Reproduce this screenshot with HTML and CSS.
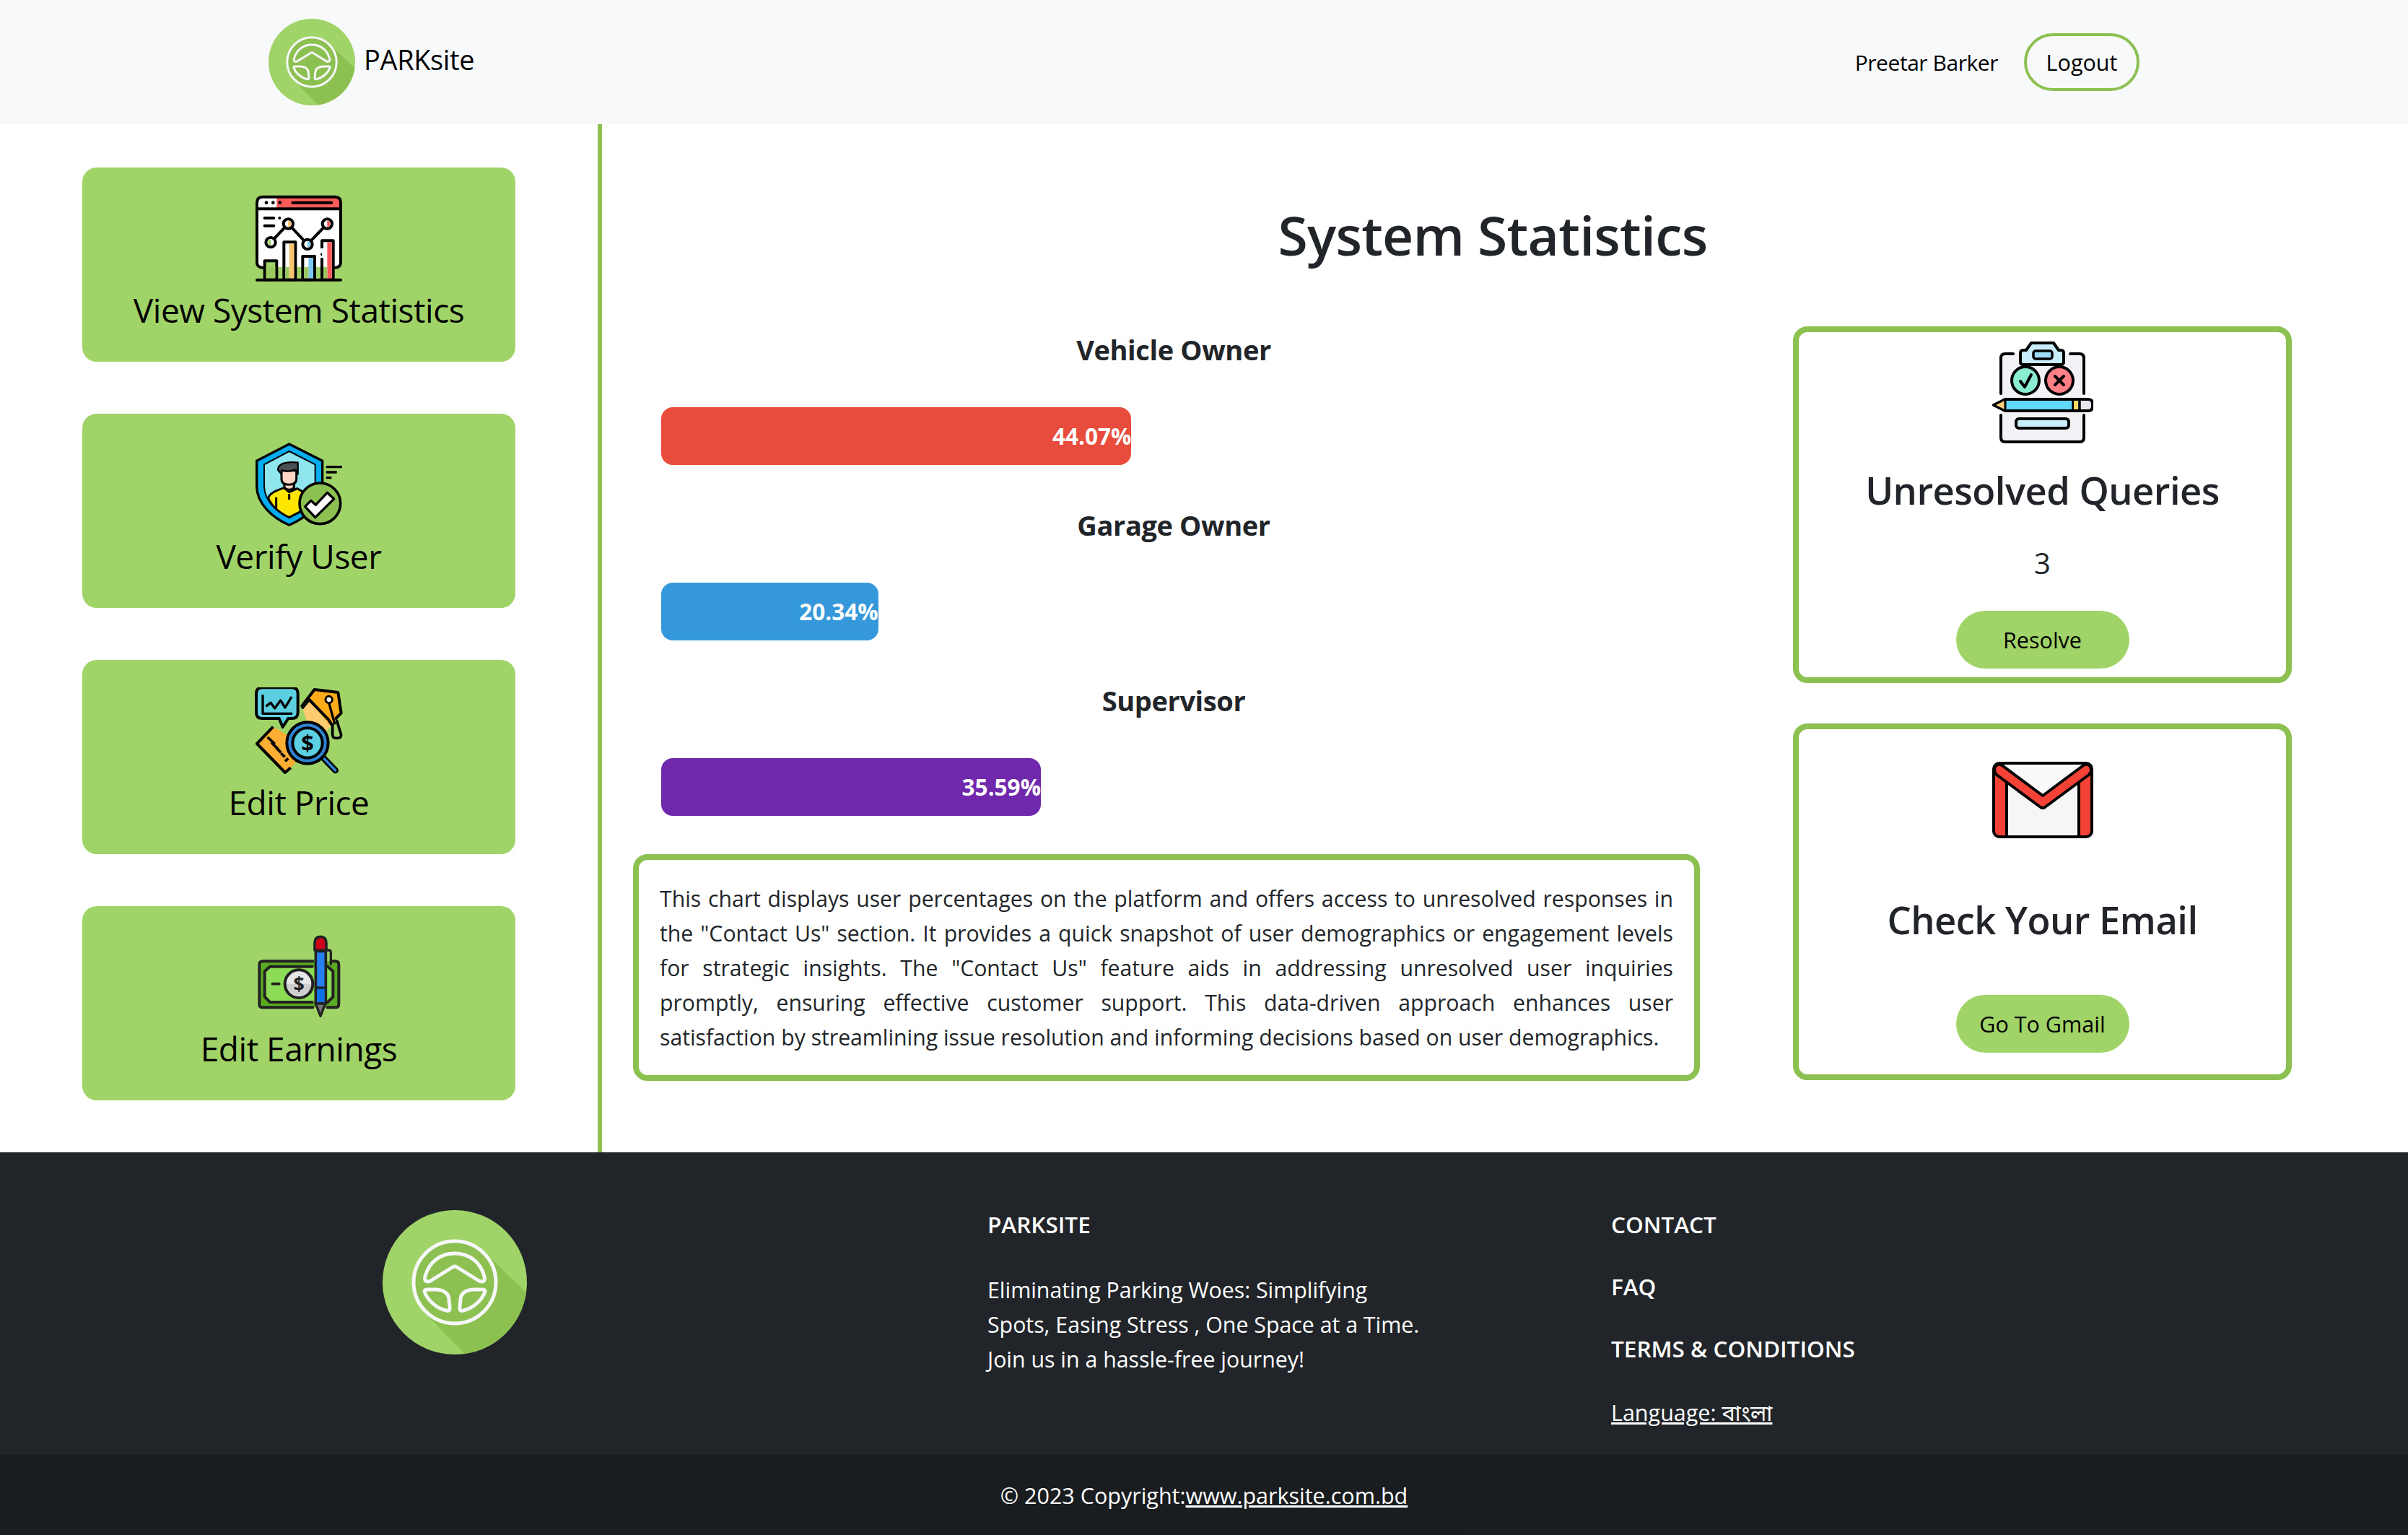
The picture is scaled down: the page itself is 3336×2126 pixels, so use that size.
FILE: index.html
```html
<!DOCTYPE html>
<html lang="en">
<head>
<meta charset="utf-8">
<title>PARKsite</title>
<link rel="stylesheet" href="styles.css">
</head>
<body>
<svg class="defs" width="0" height="0" aria-hidden="true">
  <defs>
    <clipPath id="logo-clip"><circle cx="100" cy="100" r="100"/></clipPath>
    <symbol id="logo" viewBox="0 0 200 200">
      <circle cx="100" cy="100" r="100" fill="#a0d468"/>
      <polygon clip-path="url(#logo-clip)" points="150,67 210,125 210,210 125,210 63,147 60,60 110,40" fill="#8cc152"/>
      <circle cx="100" cy="100" r="57" fill="#8cc152" stroke="#f5f7fa" stroke-width="5"/>
      <g fill="none" stroke="#f5f7fa" stroke-width="5" stroke-linejoin="round">
        <path d="M63 99Q57 99 59 92C64 72 80 60 100 60C120 60 136 72 141 92Q143 99 137 99Q135 99 132 97L103 79Q100 77 97 79L68 97Q66 99 63 99Z"/>
        <path d="M62 110H72C84 110 92 115 92 124L93 134Q94 141 88 139C74 136 62 124 58 113Q58 110 62 110Z"/>
        <path d="M138 110H128C116 110 108 115 108 124L107 134Q106 141 112 139C126 136 138 124 142 113Q142 110 138 110Z"/>
      </g>
    </symbol>
  </defs>
</svg>

<header class="topbar">
  <a class="brand">
    <svg class="brand-logo"><use href="#logo"/></svg>
    <span class="brand-name">PARKsite</span>
  </a>
  <div class="account">
    <span class="account-name">Preetar Barker</span>
    <a class="logout">Logout</a>
  </div>
</header>

<main class="layout">
  <nav class="sidebar">
    <a class="side-card">
      <svg class="side-icon" viewBox="0 0 450 390">
        <path d="M48 285V32Q48 8 72 8H372Q396 8 396 32V285Q396 302 378 302H66Q48 302 48 285Z" fill="#fff"/>
        <path d="M130 8H372Q396 8 396 32V58H130Z" fill="#ff5a5a"/>
        <rect x="48" y="300" width="348" height="50" fill="#a0d468"/>
        <g fill="none" stroke="#000" stroke-width="12" stroke-linecap="round" stroke-linejoin="round">
          <path d="M72 302Q48 302 48 280V32Q48 8 72 8H372Q396 8 396 32V280Q396 302 372 302"/>
          <path d="M48 58H396M196 32H358M80 96H118M80 128H118"/>
          <path d="M105 197L178 120L258 205L340 120"/>
          <path d="M48 353H396"/>
        </g>
        <g fill="#000"><circle cx="87" cy="32" r="7"/><circle cx="115" cy="32" r="7"/><circle cx="143" cy="32" r="7"/><circle cx="142" cy="96" r="6"/><circle cx="318" cy="247" r="6"/></g>
        <g stroke="#000" stroke-width="12" stroke-linejoin="round">
          <rect x="80" y="274" width="50" height="78" fill="#a0d468"/>
          <rect x="160" y="196" width="48" height="156" fill="#fff"/>
          <rect x="238" y="255" width="50" height="97" fill="#fff"/>
          <path d="M318 222V190H365V352H318V262" fill="#fff"/>
        </g>
        <rect x="182" y="203" width="20" height="143" fill="#f7c56b"/>
        <rect x="262" y="262" width="20" height="84" fill="#7cc8f5"/>
        <rect x="340" y="196" width="19" height="150" fill="#ff5a5a"/>
        <rect x="86" y="300" width="38" height="46" fill="#9ac95e"/>
        <rect x="166" y="300" width="16" height="46" fill="#9ac95e"/>
        <rect x="244" y="300" width="18" height="46" fill="#9ac95e"/>
        <rect x="324" y="300" width="16" height="46" fill="#9ac95e"/>
        <g stroke="#000" stroke-width="12">
          <circle cx="105" cy="197" r="20" fill="#fff"/><path d="M105 185a12 12 0 0 0 0 24z" fill="#a0d468" stroke="none"/>
          <circle cx="178" cy="120" r="20" fill="#fff"/><path d="M178 108a12 12 0 0 1 0 24z" fill="#f7c56b" stroke="none"/>
          <circle cx="258" cy="205" r="20" fill="#fff"/><path d="M258 193a12 12 0 0 1 0 24z" fill="#7cc8f5" stroke="none"/>
          <circle cx="340" cy="120" r="20" fill="#fff"/><path d="M340 108a12 12 0 0 1 0 24z" fill="#ff5a5a" stroke="none"/>
        </g>
      </svg>
      <span class="side-label">View System Statistics</span>
    </a>
    <a class="side-card">
      <svg class="side-icon" viewBox="0 3 450 390">
        <path d="M182 15L47 85V190C47 262 110 320 182 352C254 320 320 262 320 190V85Z" fill="#00aeef" stroke="#000" stroke-width="10" stroke-linejoin="round"/>
        <path d="M182 45L78 100V190C78 250 130 297 182 320C234 297 290 250 290 190V100Z" fill="#90e6ee" stroke="#000" stroke-width="6"/>
        <path d="M95 240C100 218 130 208 160 197L182 215L215 200L260 225L240 290L182 320C140 300 110 275 95 240Z" fill="#ffe600" stroke="#000" stroke-width="9" stroke-linejoin="round"/>
        <path d="M128 236V282M182 222V246" stroke="#000" stroke-width="9" fill="none"/>
        <path d="M162 172V196Q182 214 202 196V172Z" fill="#ffd6c4" stroke="#000" stroke-width="9"/>
        <path d="M150 125V160Q150 184 180 184Q212 184 212 160V125Z" fill="#ffd6c4" stroke="#000" stroke-width="9"/>
        <path d="M135 122C135 98 165 86 218 92V140L208 122C190 128 165 128 150 124V140Z" fill="#4a4f55" stroke="#000" stroke-width="7" stroke-linejoin="round"/>
        <circle cx="310" cy="262" r="85" fill="#8cc152" stroke="#000" stroke-width="11"/>
        <path d="M248 275L272 250L292 268L340 217L368 243L290 320Z" fill="#fff" stroke="#000" stroke-width="10" stroke-linejoin="round"/>
        <path d="M335 110H402M335 132H380M335 155H358" stroke="#000" stroke-width="10"/>
      </svg>
      <span class="side-label">Verify User</span>
    </a>
    <a class="side-card">
      <svg class="side-icon" viewBox="0 21 450 390">
        <path d="M235 100L288 28L385 42L398 128L345 195L280 240Z" fill="#ffcc70"/>
        <path d="M288 28L385 42L398 128L352 180L265 72Z" fill="#ffab1a"/>
        <path d="M235 98L287 30L385 42L398 128L376 150M238 105L265 72L345 155L358 175" fill="none" stroke="#000" stroke-width="12" stroke-linejoin="round" stroke-linecap="round"/>
        <path d="M115 185L48 255L165 375L205 340L230 250Z" fill="#ffad33"/>
        <path d="M115 185L48 255L165 375L188 355" fill="none" stroke="#000" stroke-width="12" stroke-linejoin="round"/>
        <path d="M92 228L122 256M108 250L136 278M128 272L148 292M148 295L164 310M165 328L178 316" stroke="#000" stroke-width="11" fill="none"/>
        <path d="M70 22H193Q218 22 218 47V125Q218 150 193 150H178L155 186L140 150H70Q45 150 45 125V47Q45 22 70 22Z" fill="#5cd0e0" stroke="#000" stroke-width="12" stroke-linejoin="round"/>
        <path d="M72 52V130H195M85 100L105 85L122 108L146 75L165 105L192 60" fill="none" stroke="#000" stroke-width="10" stroke-linejoin="round"/>
        <path d="M347 85L372 175" stroke="#000" stroke-width="10"/>
        <path d="M362 175V218Q362 232 380 232Q398 232 398 218L380 160" fill="none" stroke="#000" stroke-width="11" stroke-linecap="round"/>
        <circle cx="347" cy="72" r="14" fill="#fff" stroke="#000" stroke-width="9"/>
        <path d="M322 312L374 366" stroke="#000" stroke-width="26" stroke-linecap="round"/>
        <path d="M322 312L374 366" stroke="#2f86d6" stroke-width="10" stroke-linecap="round"/>
        <circle cx="258" cy="252" r="86" fill="#2f86d6" stroke="#000" stroke-width="12"/>
        <circle cx="258" cy="252" r="62" fill="#5cd0e0" stroke="#000" stroke-width="12"/>
        <text class="icon-dollar" x="258" y="284" text-anchor="middle">$</text>
      </svg>
      <span class="side-label">Edit Price</span>
    </a>
    <a class="side-card">
      <svg class="side-icon" viewBox="0 9 450 390">
        <rect x="58" y="124" width="330" height="192" rx="14" fill="#5aaa22"/>
        <path d="M102 146H345L364 166V272L345 294H102L80 272V166Z" fill="#8ddc55"/>
        <path d="M280 124H72Q58 124 58 138V302Q58 316 72 316H280M340 316H374Q388 316 388 302V138Q388 124 374 124H362M278 146H102L80 166V272L102 294H278M342 146L364 166V272L342 294" fill="none" stroke="#222" stroke-width="12" stroke-linecap="round" stroke-linejoin="round"/>
        <path d="M112 218H140" stroke="#222" stroke-width="11" stroke-linecap="round"/>
        <circle cx="222" cy="218" r="58" fill="#e6e6e8"/>
        <path d="M166 218A58 58 0 0 0 280 218Z" fill="#cfcfd2"/>
        <circle cx="222" cy="218" r="58" fill="none" stroke="#222" stroke-width="12"/>
        <text class="icon-dollar icon-dollar-bill" x="222" y="246" text-anchor="middle">$</text>
        <path d="M335 78H346Q355 78 355 88V136" fill="none" stroke="#222" stroke-width="10" stroke-linecap="round"/>
        <path d="M292 82V300H334V82Z" fill="#2680f0" stroke="#222" stroke-width="11"/>
        <rect x="298" y="234" width="30" height="60" fill="#0b6fe8"/>
        <path d="M292 234H334" stroke="#222" stroke-width="10"/>
        <path d="M288 78V48Q288 22 312 22Q336 22 336 48V78Z" fill="#d0021b" stroke="#222" stroke-width="11" stroke-linejoin="round"/>
        <path d="M292 300L312 352L332 300Z" fill="#777" stroke="#222" stroke-width="10" stroke-linejoin="round"/>
      </svg>
      <span class="side-label">Edit Earnings</span>
    </a>
  </nav>

  <section class="content">
    <h1 class="page-title">System Statistics</h1>
    <div class="columns">
      <div class="left-col">
        <div class="chart">
          <h2 class="bar-label">Vehicle Owner</h2>
          <div class="bar bar-red" style="width:44.07%">44.07%</div>
          <h2 class="bar-label">Garage Owner</h2>
          <div class="bar bar-blue" style="width:20.34%">20.34%</div>
          <h2 class="bar-label">Supervisor</h2>
          <div class="bar bar-purple" style="width:35.59%">35.59%</div>
        </div>
        <p class="note">This chart displays user percentages on the platform and offers access to unresolved responses in the "Contact Us" section. It provides a quick snapshot of user demographics or engagement levels for strategic insights. The "Contact Us" feature aids in addressing unresolved user inquiries promptly, ensuring effective customer support. This data-driven approach enhances user satisfaction by streamlining issue resolution and informing decisions based on user demographics.</p>
      </div>
      <div class="right-col">
        <article class="info-card">
          <svg class="query-icon" viewBox="0 0 140 141">
            <rect x="12" y="17" width="115" height="122" rx="6" fill="#f3f2f6"/>
            <path d="M29 17H18Q12 17 12 23V72M127 72V23Q127 17 121 17H108M12 102V133Q12 139 18 139H121Q127 139 127 133V102" fill="none" stroke="#000" stroke-width="4" stroke-linecap="round"/>
            <path d="M43 32H95Q99 32 99 28V16Q99 12 95 12H92L85 2H54L47 12H43Q39 12 39 16V28Q39 32 43 32Z" fill="#c8eefc" stroke="#000" stroke-width="4" stroke-linejoin="round"/>
            <rect x="57" y="13" width="26" height="11" rx="3" fill="#9fdcf5" stroke="#000" stroke-width="3.5"/>
            <circle cx="46" cy="54" r="19" fill="#8aecd0" stroke="#000" stroke-width="4"/>
            <circle cx="93" cy="54" r="19" fill="#ff8087" stroke="#000" stroke-width="4"/>
            <path d="M39 55L45 63L54 46M87 48L99 60M99 48L87 60" fill="none" stroke="#000" stroke-width="4" stroke-linecap="round" stroke-linejoin="round"/>
            <path d="M2 88L18 80H132Q139 80 139 86V90Q139 96 132 96H18Z" fill="#61d8fa" stroke="#000" stroke-width="4" stroke-linejoin="round"/>
            <path d="M2 88L18 80V96Z" fill="#ffd27d" stroke="#000" stroke-width="3" stroke-linejoin="round"/>
            <path d="M120 82H132Q137 82 137 87V89Q137 94 132 94H120Z" fill="#e8e6ec"/>
            <path d="M112 80V96M121 80V96" stroke="#000" stroke-width="3.5"/>
            <rect x="113" y="82" width="6" height="12" fill="#ffd85e"/>
            <rect x="33" y="107" width="73" height="13" rx="4" fill="#c8eefc" stroke="#000" stroke-width="4"/>
          </svg>
          <h3 class="info-title info-title-query">Unresolved Queries</h3>
          <p class="info-count">3</p>
          <a class="pill pill-query">Resolve</a>
        </article>
        <article class="info-card">
          <svg class="mail-icon" viewBox="0 0 140 106">
            <rect x="2" y="2" width="136" height="102" rx="8" fill="#f6f6f6"/>
            <path d="M2 10V96Q2 104 10 104H18V20L10 8ZM138 10V96Q138 104 130 104H122V20L130 8Z" fill="#f44336"/>
            <path d="M20 14V104M120 14V104" stroke="#000" stroke-width="4"/>
            <path d="M17 3H123Q133 3 136 12L70 62L4 12Q7 3 17 3Z" fill="#fafafa"/>
            <path d="M8 4Q3 5 3 12Q3 15 6 18L67 63Q70 65 73 63L134 18Q137 15 137 12Q137 5 132 4Q128 3 125 6L70 47L15 6Q12 3 8 4Z" fill="#f44336" stroke="#000" stroke-width="4" stroke-linejoin="round"/>
            <rect x="2" y="2" width="136" height="102" rx="8" fill="none" stroke="#000" stroke-width="4"/>
          </svg>
          <h3 class="info-title info-title-mail">Check Your Email</h3>
          <a class="pill pill-mail">Go To Gmail</a>
        </article>
      </div>
    </div>
  </section>
</main>

<footer class="footer">
  <div class="footer-main">
    <div class="footer-logo"><svg class="footer-logo-svg"><use href="#logo"/></svg></div>
    <div class="footer-about">
      <h4 class="footer-head">PARKSITE</h4>
      <p class="footer-text">Eliminating Parking Woes: Simplifying<br>Spots, Easing Stress , One Space at a Time.<br>Join us in a hassle-free journey!</p>
    </div>
    <ul class="footer-links">
      <li class="footer-head">CONTACT</li>
      <li class="footer-head">FAQ</li>
      <li class="footer-head">TERMS &amp; CONDITIONS</li>
      <li class="footer-lang"><a class="link">Language: বাংলা</a></li>
    </ul>
  </div>
  <div class="copyright">© 2023 Copyright:<a class="link">www.parksite.com.bd</a></div>
</footer>
</body>
</html>
```

FILE: styles.css
```css
* { box-sizing: border-box; }
html, body { margin: 0; padding: 0; }
body {
  width: 3336px;
  height: 2126px;
  overflow: hidden;
  font-family: "Open Sans", "Noto Sans", "Noto Sans Bengali", sans-serif;
  font-size: 30.5px;
  line-height: 48px;
  color: #212529;
  background: #fff;
}
.defs { position: absolute; }

/* header */
.topbar {
  height: 172px;
  background: #f8f9fa;
  display: flex;
  justify-content: space-between;
  align-items: center;
  padding: 0 372px;
}
.brand { display: flex; align-items: center; gap: 12px; color: #000; }
.brand-logo { width: 120px; height: 120px; display: block; }
.brand-name { font-size: 38px; letter-spacing: -0.01em; margin-top: -8px; }
.account { display: flex; align-items: center; gap: 36px; color: #000; }
.account-name { font-size: 30px; letter-spacing: -0.015em; padding-top: 2px; }
.logout {
  width: 160px;
  height: 80px;
  border: 4px solid #8cc152;
  border-radius: 40px;
  display: flex;
  align-items: center;
  justify-content: center;
}

/* layout */
.layout { display: flex; height: 1424px; }
.sidebar {
  width: 834px;
  flex: none;
  border-right: 6px solid #8cc152;
  padding: 60px 0 0 114px;
  display: flex;
  flex-direction: column;
  gap: 72px;
}
.side-card {
  width: 600px;
  height: 269px;
  background: #a0d468;
  border-radius: 20px;
  color: #000;
  padding-top: 38px;
  display: flex;
  flex-direction: column;
  align-items: center;
}
.side-icon { width: 150px; height: 130px; display: block; flex: none; margin-left: 2px; }
.side-label { font-size: 46px; line-height: 60px; letter-spacing: -0.01em; margin-top: -1px; }
.icon-dollar { font-family: "Open Sans", sans-serif; font-weight: 700; font-size: 92px; fill: #000; }
.icon-dollar-bill { font-size: 80px; fill: #222; }

/* content */
.content { flex: 1; min-width: 0; padding: 105px 77px 0 43px; }
.page-title {
  margin: 0;
  font-size: 75px;
  line-height: 96px;
  font-weight: 600;
  letter-spacing: -0.01em;
  text-align: center;
}
.columns { display: flex; margin-top: 79px; }
.left-col { width: 1518px; flex: none; padding-top: 8px; }
.right-col { width: 691px; margin-left: 89px; display: flex; flex-direction: column; gap: 56px; }

.chart { margin-left: 39px; width: 1478px; }
.bar-label {
  margin: 0 0 56px;
  padding-right: 58px;
  font-size: 38px;
  line-height: 48px;
  font-weight: 700;
  letter-spacing: -0.01em;
  text-align: center;
}
.bar {
  height: 80px;
  margin-bottom: 59px;
  border-radius: 16px;
  color: #fff;
  font-size: 31.5px;
  font-weight: 700;
  text-align: right;
  line-height: 80px;
}
.bar:last-child { margin-bottom: 53px; }
.bar-red { background: #e74c3c; }
.bar-blue { background: #3498db; }
.bar-purple { background: #7028ad; }

.note {
  margin: 0;
  width: 1478px;
  height: 314px;
  border: 8px solid #8cc152;
  border-radius: 20px;
  padding: 30px 29px 0;
  font-size: 30.2px;
  text-align: justify;
}

.info-card {
  height: 494px;
  border: 8px solid #8cc152;
  border-radius: 20px;
  display: flex;
  flex-direction: column;
  align-items: center;
}
.query-icon { width: 140px; height: 141px; display: block; margin-top: 13px; flex: none; }
.mail-icon { width: 140px; height: 106px; display: block; margin-top: 45px; flex: none; }
.info-title { margin: 0; font-size: 52.5px; line-height: 67px; font-weight: 600; letter-spacing: -0.01em; }
.info-title-query { margin-top: 31px; }
.info-title-mail { margin-top: 79px; }
.info-count { margin: 44px 0 0; font-size: 40px; }
.pill {
  width: 240px;
  height: 80px;
  border-radius: 40px;
  background: #a0d468;
  color: #000;
  display: flex;
  align-items: center;
  justify-content: center;
}
.pill-query { margin-top: 42px; }
.pill-mail { margin-top: 71px; }

/* footer */
.footer { height: 530px; background: #212529; color: #fff; }
.footer-main {
  height: 419px;
  display: grid;
  grid-template-columns: 1368px 864px 1fr;
}
.footer-logo { padding: 80px 0 0 530px; }
.footer-logo-svg { width: 200px; height: 200px; display: block; }
.footer-about { padding-top: 76px; }
.footer-head { margin: 0; font-size: 31.5px; line-height: 48px; font-weight: 600; }
.footer-text { margin: 43px 0 0; font-size: 30.3px; }
.footer-links {
  list-style: none;
  margin: 0;
  padding: 76px 0 0;
  display: flex;
  flex-direction: column;
  gap: 38px;
}
.footer-lang { padding-top: 2px; }
.link { color: #fff; text-decoration: underline; }
.copyright {
  height: 111px;
  background: rgba(0, 0, 0, 0.2);
  display: flex;
  align-items: center;
  justify-content: center;
}
```
